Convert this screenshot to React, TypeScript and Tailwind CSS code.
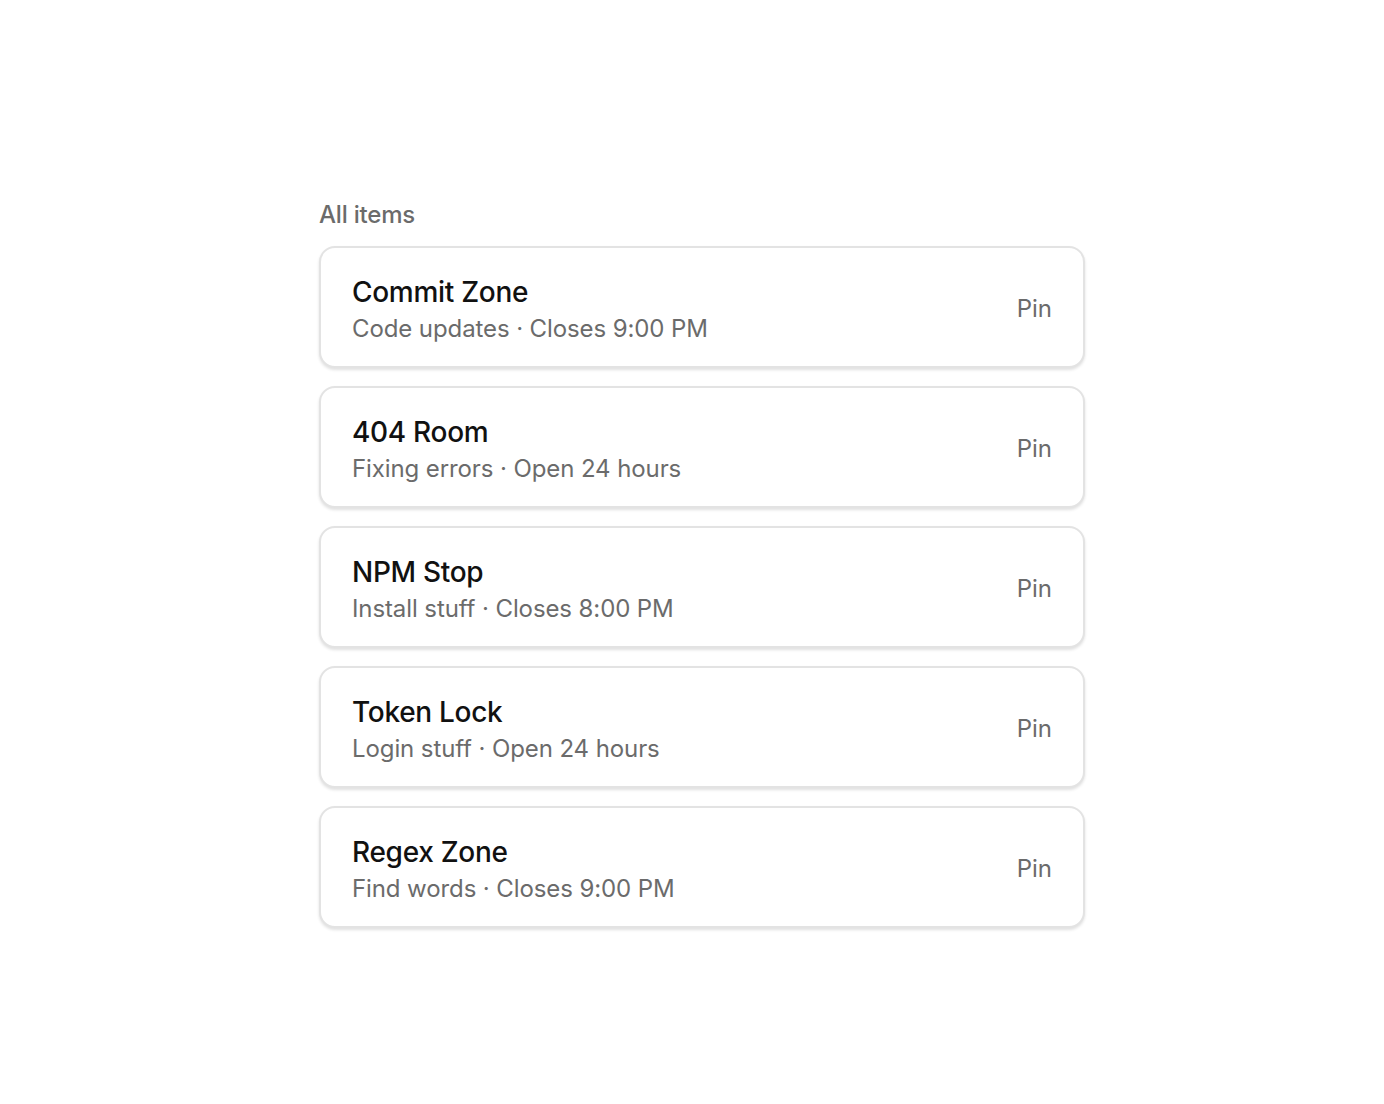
import React from "react";

const items = [
  { title: "Commit Zone", sub: "Code updates · Closes 9:00 PM" },
  { title: "404 Room", sub: "Fixing errors · Open 24 hours" },
  { title: "NPM Stop", sub: "Install stuff · Closes 8:00 PM" },
  { title: "Token Lock", sub: "Login stuff · Open 24 hours" },
  { title: "Regex Zone", sub: "Find words · Closes 9:00 PM" },
];

export default function App() {
  return (
    <div
      className="min-h-[1104px] w-full bg-white pl-[319px] pt-[200px]"
      style={{ fontFamily: "Inter, 'Noto Sans', sans-serif" }}
    >
      <div className="w-[766px]">
        <div className="text-[24px] leading-[30px] font-medium text-[#6b6b6b] mb-[16px] tracking-[-0.2px]">All items</div>
        <div className="flex flex-col gap-[18px]">
          {items.map((it) => (
            <div
              key={it.title}
              className="flex h-[122px] items-center justify-between rounded-[16px] border-2 border-[#e3e3e3] bg-white pl-[31px] pr-[31px] shadow-[0_2px_3px_rgba(0,0,0,0.12)]"
            >
              <div className="flex flex-col pt-[6px]">
                <div className="text-[28px] leading-[34px] font-medium text-[#111] tracking-[-0.3px]">{it.title}</div>
                <div className="text-[24px] leading-[32px] text-[#6b6b6b] mt-[4px] tracking-[-0.1px]">{it.sub}</div>
              </div>
              <div className="text-[24px] text-[#6b6b6b] pt-[3px]">Pin</div>
            </div>
          ))}
        </div>
      </div>
    </div>
  );
}
